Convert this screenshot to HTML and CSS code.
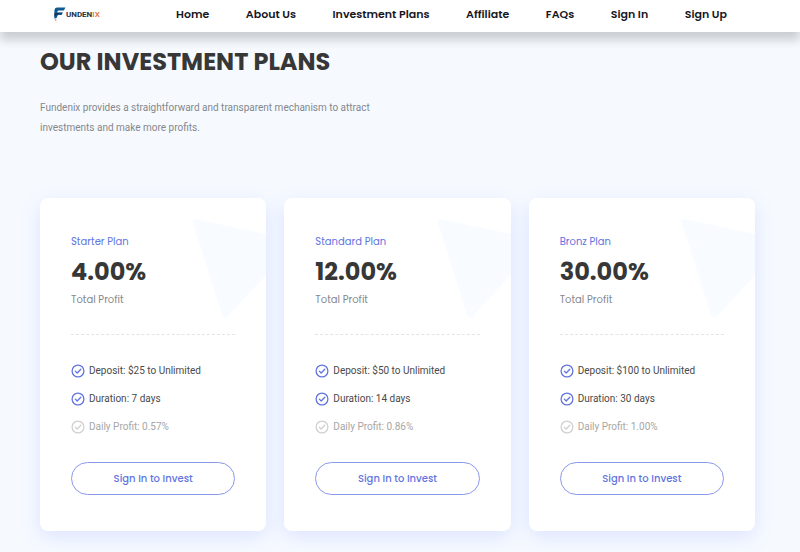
FILE: index.html
```html
<!DOCTYPE html>
<html lang="en">
<head>
    <meta charset="UTF-8">
    <meta name="viewport" content="width=device-width, initial-scale=1.0">
    <title>Fundenix - Investment Plans</title>
    <link rel="stylesheet" href="styles.css">
</head>
<body>

    <!-- Shared shapes -->
    <svg class="sprite" aria-hidden="true">
        <symbol id="check" viewBox="0 0 14 14">
            <circle cx="7" cy="7" r="5.9" fill="none" stroke="currentColor" stroke-width="1.3"/>
            <path d="M4.3 7.1l1.9 1.9 3.6-3.7" fill="none" stroke="currentColor" stroke-width="1.3" stroke-linecap="round" stroke-linejoin="round"/>
        </symbol>
        <symbol id="triangle" viewBox="0 0 74 100">
            <path d="M3 0L74 15V56L35 98Q32 101 30 96L1 4Q0 0 3 0z" fill="currentColor"/>
        </symbol>
    </svg>

    <header class="header">
        <a href="#home" class="logo" aria-label="Fundenix">
            <svg class="logo-mark" viewBox="0 0 12 14" aria-hidden="true">
                <path d="M3 0.5H11.5L9.8 3.4H4.8Q3.6 3.4 3.4 4.6V5.6H9L7.6 8H4.4Q3.4 8.2 3.2 9.4L2.6 11 0.4 11.8V3.4Q0.6 0.8 3 0.5z" fill="#0d5a94"/>
                <path d="M0.4 6.2L8.6 5.4 3 7.4 0.4 10z" fill="#1e3350"/>
                <circle cx="1.8" cy="13" r="0.7" fill="#e0605a"/>
            </svg>
            <span class="logo-text">UNDEN<span class="logo-accent">IX</span></span>
        </a>
        <nav class="nav">
            <a href="#home">Home</a>
            <a href="#about">About Us</a>
            <a href="#plans">Investment Plans</a>
            <a href="#affiliate">Affiliate</a>
            <a href="#faqs">FAQs</a>
            <a href="#signin">Sign In</a>
            <a href="#signup">Sign Up</a>
        </nav>
    </header>

    <main class="plans" id="plans">
        <h1>OUR INVESTMENT PLANS</h1>
        <p class="intro">Fundenix provides a straightforward and transparent mechanism to attract investments and make more profits.</p>

        <div class="plan-grid">
            <section class="plan-card">
                <svg class="plan-shape" aria-hidden="true"><use href="#triangle"/></svg>
                <h2 class="plan-name">Starter Plan</h2>
                <div class="plan-rate">4.00%</div>
                <div class="plan-label">Total Profit</div>
                <ul class="plan-features">
                    <li><svg aria-hidden="true"><use href="#check"/></svg>Deposit: $25 to Unlimited</li>
                    <li><svg aria-hidden="true"><use href="#check"/></svg>Duration: 7 days</li>
                    <li class="muted"><svg aria-hidden="true"><use href="#check"/></svg>Daily Profit: 0.57%</li>
                </ul>
                <button type="button" class="plan-button">Sign In to Invest</button>
            </section>

            <section class="plan-card">
                <svg class="plan-shape" aria-hidden="true"><use href="#triangle"/></svg>
                <h2 class="plan-name">Standard Plan</h2>
                <div class="plan-rate">12.00%</div>
                <div class="plan-label">Total Profit</div>
                <ul class="plan-features">
                    <li><svg aria-hidden="true"><use href="#check"/></svg>Deposit: $50 to Unlimited</li>
                    <li><svg aria-hidden="true"><use href="#check"/></svg>Duration: 14 days</li>
                    <li class="muted"><svg aria-hidden="true"><use href="#check"/></svg>Daily Profit: 0.86%</li>
                </ul>
                <button type="button" class="plan-button">Sign In to Invest</button>
            </section>

            <section class="plan-card">
                <svg class="plan-shape" aria-hidden="true"><use href="#triangle"/></svg>
                <h2 class="plan-name">Bronz Plan</h2>
                <div class="plan-rate">30.00%</div>
                <div class="plan-label">Total Profit</div>
                <ul class="plan-features">
                    <li><svg aria-hidden="true"><use href="#check"/></svg>Deposit: $100 to Unlimited</li>
                    <li><svg aria-hidden="true"><use href="#check"/></svg>Duration: 30 days</li>
                    <li class="muted"><svg aria-hidden="true"><use href="#check"/></svg>Daily Profit: 1.00%</li>
                </ul>
                <button type="button" class="plan-button">Sign In to Invest</button>
            </section>
        </div>
    </main>

</body>
</html>
```
FILE: styles.css
```css
:root {
    --page-background: #f6faff;
    --primary-color: #6174e0;
    --heading-color: #373737;
    --text-color: #4a4a4a;
    --text-muted: #85878c;
    --heading-font: Poppins, Inter, sans-serif;
    --body-font: Roboto, sans-serif;
}

* {
    margin: 0;
    padding: 0;
    box-sizing: border-box;
}

body {
    font-family: var(--body-font);
    font-size: 10px;
    background-color: var(--page-background);
    color: var(--text-color);
}

.sprite {
    position: absolute;
    width: 0;
    height: 0;
}

/* Header */
.header {
    display: flex;
    align-items: center;
    height: 32px;
    padding: 0 73px 4px 54px;
    background-color: #fff;
    box-shadow: 0 8px 10px rgba(0, 0, 0, 0.18);
}

.logo {
    display: flex;
    align-items: center;
    width: 122px;
    flex-shrink: 0;
    text-decoration: none;
}

.logo-mark {
    width: 12px;
    height: 14px;
}

.logo-text {
    font-size: 8px;
    font-weight: 700;
    color: #26323f;
}

.logo-accent {
    color: #e8833a;
}

.nav {
    display: flex;
    flex: 1;
    justify-content: space-between;
}

.nav a {
    font-family: var(--heading-font);
    font-size: 11px;
    font-weight: 600;
    line-height: 20px;
    color: #17171f;
    text-decoration: none;
    white-space: nowrap;
}

/* Plans */
.plans {
    padding: 10px 45px 40px 40px;
}

.plans h1 {
    font-family: var(--heading-font);
    font-size: 24px;
    font-weight: 700;
    line-height: 40px;
    color: var(--heading-color);
}

.intro {
    max-width: 360px;
    margin-top: 16px;
    line-height: 20px;
    color: var(--text-muted);
}

.plan-grid {
    display: grid;
    grid-template-columns: repeat(3, 1fr);
    gap: 18px;
    margin-top: 60px;
}

.plan-card {
    position: relative;
    padding: 36px 31px;
    background-color: #fff;
    border-radius: 8px;
    box-shadow: 0 6px 20px rgba(97, 110, 255, 0.16);
}

.plan-shape {
    position: absolute;
    top: 21px;
    right: 0;
    width: 74px;
    height: 100px;
    color: #f8fbff;
}

.plan-name,
.plan-label {
    font-family: var(--heading-font);
    font-size: 10px;
    font-weight: 400;
    line-height: 16px;
}

.plan-name {
    margin-bottom: 2px;
    color: var(--primary-color);
}

.plan-rate {
    font-family: var(--heading-font);
    font-size: 24px;
    font-weight: 700;
    line-height: 40px;
    color: var(--heading-color);
}

.plan-label {
    padding-bottom: 26px;
    border-bottom: 1px dashed #e4e4e4;
    color: var(--text-muted);
}

.plan-features {
    display: grid;
    gap: 8px;
    margin: 26px 0 25px;
    list-style: none;
}

.plan-features li {
    display: flex;
    align-items: center;
    gap: 4px;
    line-height: 20px;
}

.plan-features svg {
    width: 14px;
    height: 14px;
    flex-shrink: 0;
    color: var(--primary-color);
}

.plan-features .muted {
    color: #a6a6a6;
}

.plan-features .muted svg {
    color: #d0d0d0;
}

.plan-button {
    display: block;
    width: 100%;
    height: 33px;
    border: 1px solid #8a98ea;
    border-radius: 17px;
    background-color: transparent;
    font-family: var(--heading-font);
    font-size: 10px;
    font-weight: 500;
    color: var(--primary-color);
    cursor: pointer;
}

.plan-button:hover {
    background-color: var(--primary-color);
    color: #fff;
}

@media (max-width: 700px) {
    .header {
        height: auto;
        padding: 8px 20px;
    }

    .nav {
        flex-wrap: wrap;
        gap: 4px 16px;
    }

    .plans {
        padding: 10px 20px 40px;
    }

    .plan-grid {
        grid-template-columns: 1fr;
    }
}
```
